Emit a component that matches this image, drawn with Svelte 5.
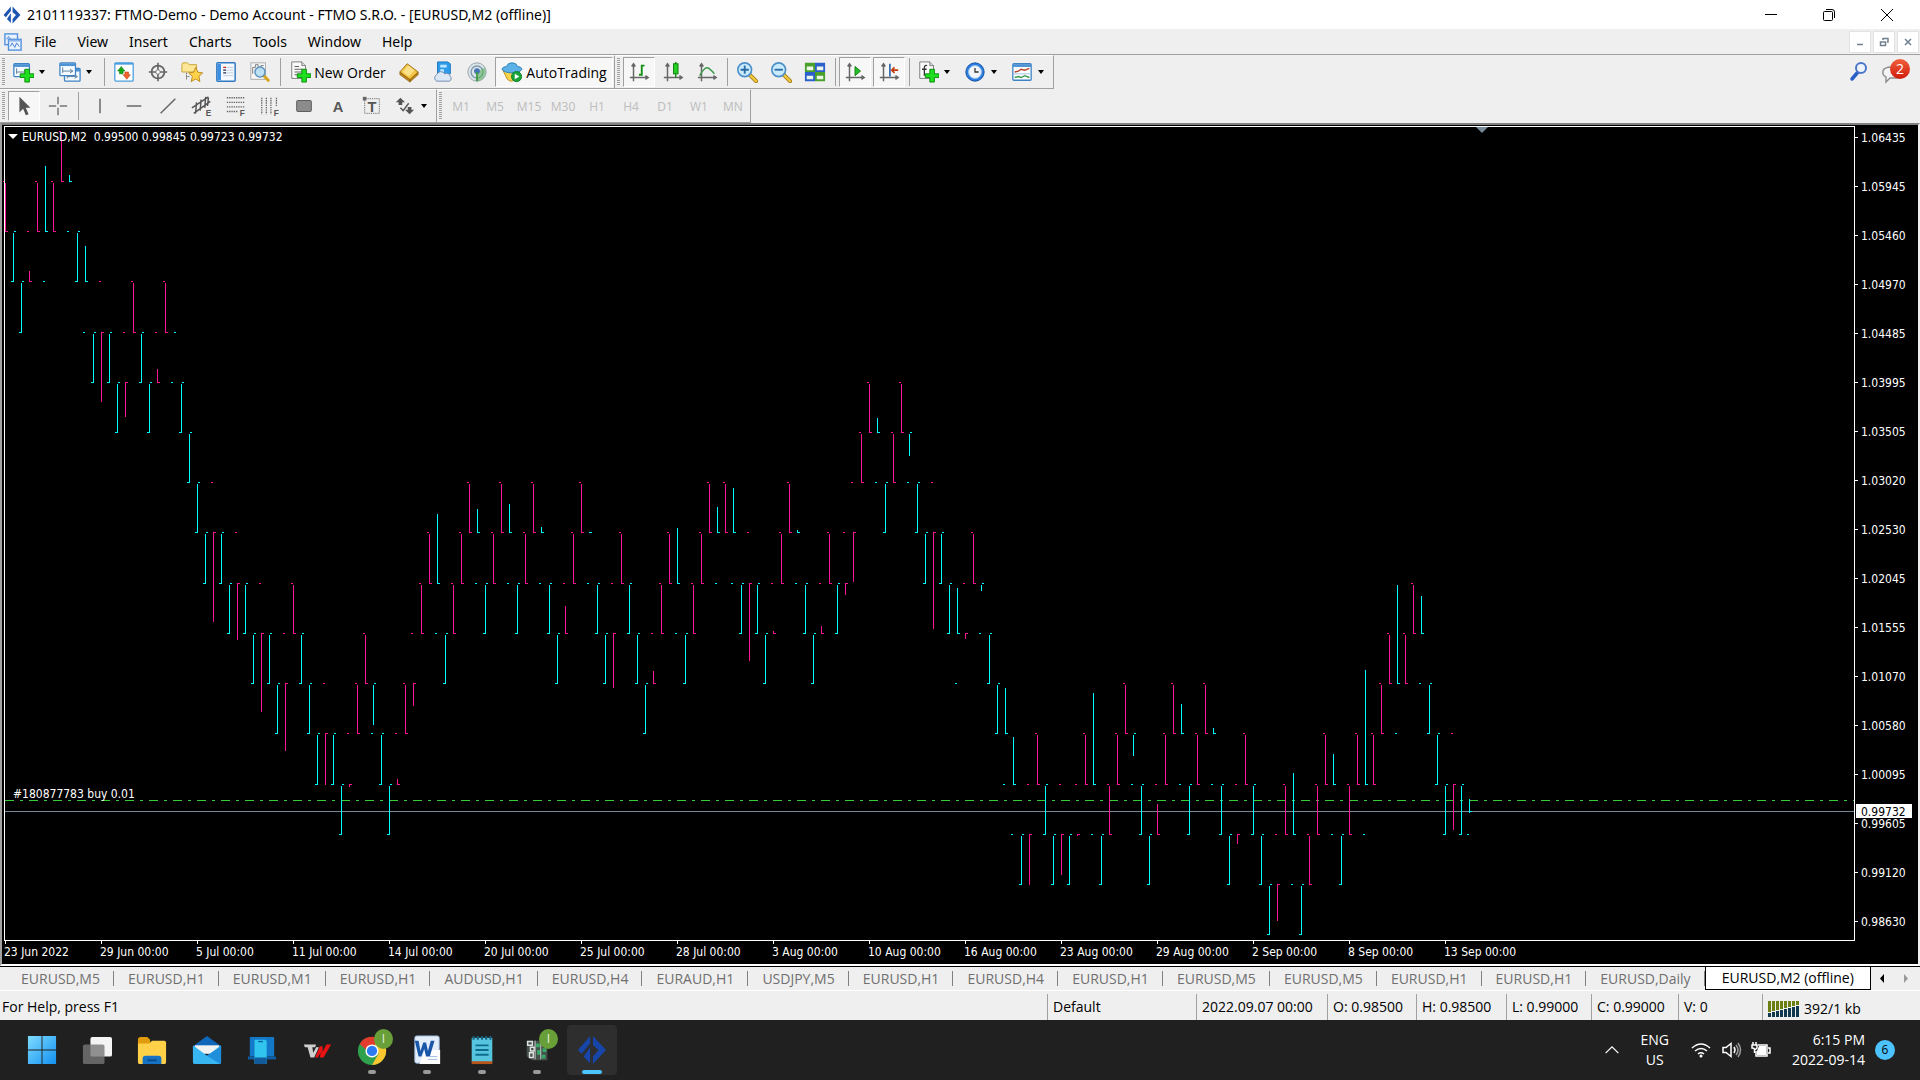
<script>
  const MENUS = ['File', 'View', 'Insert', 'Charts', 'Tools', 'Window', 'Help'];
  const LINE_TOOLS = ['vline', 'hline', 'trend', 'channel', 'fibo', 'fibotime', 'rect', 'letter', 'label'];
  const PERIODS = ['M1', 'M5', 'M15', 'M30', 'H1', 'H4', 'D1', 'W1', 'MN'];
  const TABS = [
    'EURUSD,M5', 'EURUSD,H1', 'EURUSD,M1', 'EURUSD,H1', 'AUDUSD,H1', 'EURUSD,H4',
    'EURAUD,H1', 'USDJPY,M5', 'EURUSD,H1', 'EURUSD,H4', 'EURUSD,H1', 'EURUSD,M5',
    'EURUSD,M5', 'EURUSD,H1', 'EURUSD,H1', 'EURUSD,Daily', 'EURUSD,M2 (offline)',
  ];
  const STATUS = ['Default', '2022.09.07 00:00', 'O: 0.98500', 'H: 0.98500', 'L: 0.99000', 'C: 0.99000', 'V: 0'];
  const PRICES = [
    '1.06435', '1.05945', '1.05460', '1.04970', '1.04485', '1.03995', '1.03505', '1.03020', '1.02530',
    '1.02045', '1.01555', '1.01070', '1.00580', '1.00095', '0.99605', '0.99120', '0.98630',
  ];
  const DATES = [
    '23 Jun 2022', '29 Jun 00:00', '5 Jul 00:00', '11 Jul 00:00', '14 Jul 00:00', '20 Jul 00:00',
    '25 Jul 00:00', '28 Jul 00:00', '3 Aug 00:00', '10 Aug 00:00', '16 Aug 00:00', '23 Aug 00:00',
    '29 Aug 00:00', '2 Sep 00:00', '8 Sep 00:00', '13 Sep 00:00',
  ];
  const APPS = [
    { id: 'start', name: 'Start' },
    { id: 'taskview', name: 'Task View' },
    { id: 'explorer', name: 'File Explorer' },
    { id: 'mail', name: 'Mail' },
    { id: 'phone', name: 'Your Phone' },
    { id: 'tv', name: 'Trading' },
    { id: 'chrome', name: 'Chrome', running: true },
    { id: 'word', name: 'Word', running: true },
    { id: 'notepad', name: 'Notepad', running: true },
    { id: 'renko', name: 'Renko', running: true },
    { id: 'ftmo', name: 'FTMO', running: true, active: true },
  ];

  // Y of every 50-point brick level, top down.
  const LEVELS = [131, 181, 231, 281, 332, 382, 432, 482, 532, 583, 633, 683, 733, 784, 834, 884, 934];
  const STEP = 8;

  // One entry per bar: direction + level of the right tick, optional line extent.
  // C = lower brick behind it, P = upper brick behind it.
  const BARS = `
    P2 C2 C3 P3:271-281 P2 C2:166-231 P2 P1 C1:175-181 C2 C3:246-281 C4 P4:332-401 C4 C5 P5:382-416
    P4 C4 C5 P5:369-382 P4 C4:0-0 C5 C6 C7 C8 P8:532-621 C8 C9 P9:583-639 C9 C10 P10:633-711 C10 C11
    P11:683-750 P10 C10 C11 C12 P12:733-784 C12 C13 P13:784-786 P12 P11 C11:685-724 C12 C13 P13:779-784
    P12 P11:683-705 P10 P9 C9:514-583 C10 P10 P9 P8 C8:509-532 C9 P9 P8 C8:504-532 C9 P9 P8 C8:527-532
    C9 C10 P10:606-633 P9 P8 C8:532-532 C9 C10 P10:633-687 P9 C9 C10 C11 P11:671-683 P10 P9 C9:528-583
    C10 P10 P9 P8 C8:507-532 P8 C8:488-532 C9 P9:583-660 C9 C10 P10:631-633 P9 P8 C8:530-532 C9 C10
    P10:626-633 P9 C9 P9:583-594 P8:532-581 P7 P6 C6:418-432 C7 P7 P6 C6:434-455 C7 C8 P8:532-628 C8 C9
    C10:588-633 P10:633-638 P9 C9:585-590 C10 C11 C12:688-733 C13:737-784 C14 P14:834-884 P13 C13 C14
    P14:834-874 C14 P14:834-835 P13 C13:693-784 C14 P14 P13 P12 C12:735-755 C13 C14 P14:804-834 P13 P12
    C12:704-733 C13 P13 P12 C12:728-733 C13 C14 P14:834-843 P13 C13 C14 C15 P15:884-920 P14 C14:773-834
    C15 P15 P14 P13 C13:754-784 C14 P14 P13 C13:670-784 P13 P12 P11 C11:585-683 P11 P10 C10:596-633 C11
    C12 C13 P13:784-829 C13`.trim().split(/\s+/);

  const box = (x, y, w, h) => `M${x} ${y}h${w}v${h}h${-w}z`;

  function barPath(dir) {
    return BARS.map((spec, i) => {
      if (spec[0] !== dir) return '';
      const [head, range] = spec.split(':');
      const level = Number(head.slice(1));
      const x = 5 + i * STEP;
      const left = LEVELS[dir === 'C' ? level + 1 : level - 1];
      const right = LEVELS[level];
      const [y1, y2] = range ? range.split('-').map(Number) : [Math.min(left, right) + 2, Math.max(left, right)];
      const line = y2 ? box(x, y1, 1, y2 - y1 + 1) : '';
      return line + box(x - 2, left, 2, 1) + box(x + 1, right, 2, 1);
    }).join('');
  }

  const cyanPath = barPath('C');
  const pinkPath = barPath('P');
  const lastBar = box(1469, 799, 1, 14) + box(1467, 834, 2, 1) + box(1470, 811, 2, 1);

  let chartW = $state(1916);
  let chartH = $state(839);
  let right  = $derived(chartW - 62);
  let bottom = $derived(chartH + 101);

  let activeTab = $state(TABS.length - 1);
  let autoTrading = $state(true);
</script>

{#snippet axes()}
  <path d="M6 4v18M2 18h19M4 6l2-3 2 3M19 16l3 2-3 2" fill="none" stroke="#666" stroke-width="1.6" />
{/snippet}

{#snippet plus()}
  <path d="M14 9h5v5h5v4h-5v5h-5v-5H9v-4h5z" fill="#1fe01f" stroke="#0a8a0a" />
{/snippet}

{#snippet windowIcon(x, y)}
  <rect {x} {y} width="17" height="14" rx="1" fill="#f4faff" stroke="#3f83c4" stroke-width="1.4" />
  <path d="M{x} {y + 2}h17" stroke="#4d93d3" stroke-width="3" />
  <path d="M{x + 3} {y + 5}v6M{x + 3} {y + 9}h11M{x + 11} {y + 7}l3 2-3 2" fill="none" stroke="#5c7894" />
{/snippet}

{#snippet icon(name)}
  <svg class="icon" viewBox="0 0 24 24" aria-hidden="true">
    {#if name === 'newchart'}
      {@render windowIcon(2, 3)}
      {@render plus()}
    {:else if name === 'profiles'}
      {@render windowIcon(6, 8)}
      {@render windowIcon(1, 2)}
    {:else if name === 'market'}
      <rect x="2" y="2" width="20" height="20" rx="1" fill="#fff" stroke="#4a9fe0" stroke-width="1.4" />
      <path d="M2 3h20" stroke="#4a9fe0" stroke-width="2" />
      <path d="M5 11l4-5 4 5h-2v3H7v-3z" fill="#16a516" stroke="#0b7d0b" stroke-width=".6" />
      <path d="M11 15h2v-3h4v3h2l-4 5z" fill="#f0622a" stroke="#b83c10" stroke-width=".6" />
    {:else if name === 'datawin'}
      <circle cx="12" cy="12" r="7" fill="none" stroke="#666" stroke-width="2" />
      <path d="M12 2v8M12 14v8M2 12h8M14 12h8" stroke="#666" stroke-width="1.8" />
      <circle cx="12" cy="12" r="2.4" fill="#fff" stroke="#777" />
    {:else if name === 'navigator'}
      <path d="M1 4l1-2h5l2 2h8v8H1z" fill="#fbe795" stroke="#c8a12c" />
      <path d="M6 13v8M6 17h4" stroke="#333" stroke-dasharray="1 1" />
      <path d="M16 7l2.4 5.2 5.2.8-4 3.7 1 5.8-4.6-3-4.8 3 1.2-5.8-4-3.7 5.4-.8z" fill="#fdd148" stroke="#b8841a" />
    {:else if name === 'terminal'}
      <rect x="2" y="2" width="20" height="20" rx="1" fill="#f5faff" stroke="#2f78c0" stroke-width="1.6" />
      <path d="M4.500 3v18" stroke="#3c8fe0" stroke-width="4" />
      <path d="M9 7h11M9 10h11M9 13h11M9 16h11" stroke="#bfcbdc" />
      <path d="M9 7h3" stroke="#d22" stroke-width="1.4" />
      <path d="M9 10h3M9 13h3" stroke="#335" stroke-width="1.4" />
    {:else if name === 'tester'}
      <rect x="2" y="2" width="16" height="18" fill="#f6f6f6" stroke="#aaa" />
      <path d="M4 14V7h3V4h3v6h3V5h3" fill="none" stroke="#777" />
      <path d="M16 16l5 5" stroke="#d9a520" stroke-width="3.400" stroke-linecap="round" />
      <circle cx="12" cy="12" r="5.500" fill="#b9dff6" fill-opacity=".9" stroke="#5d92bd" stroke-width="1.600" />
    {:else if name === 'order'}
      <path d="M3 1h11l4 4v14H3z" fill="#fafafa" stroke="#777" />
      <path d="M14 1v4h4" fill="#ddd" stroke="#777" />
      <path d="M6 6h5M6 9h9M6 12h9M6 15h6" stroke="#555" />
      {@render plus()}
    {:else if name === 'editor'}
      <path d="M2 12L10 3l12 9-9 9z" fill="#f4c542" stroke="#9a6b10" />
      <path d="M2 12l11 8v3L2 15zM13 20l9-8v3l-9 8z" fill="#b8801a" stroke="#8a5c0c" stroke-width=".6" />
      <path d="M5 12l6-7 7 5-6 7z" fill="#fbe08a" />
    {:else if name === 'vps'}
      <path d="M6 1h11l3 2v11H6z" fill="#2e9bea" stroke="#1673bd" />
      <path d="M9 4h7v3H9zM9 9h4v3H9z" fill="#bfe6ff" />
      <path d="M5 22a4 4 0 0 1 0-7 5 5 0 0 1 9-1 4 4 0 0 1 6 3 3 3 0 0 1-1 5z" fill="#dce7f5" stroke="#6d86ad" />
    {:else if name === 'signals'}
      <circle cx="12" cy="12" r="10" fill="#dce4e8" stroke="#8fa0aa" />
      <circle cx="12" cy="12" r="6.500" fill="none" stroke="#7f9cb0" stroke-width="1.500" />
      <path d="M12 12v10a10 10 0 0 0 8-15z" fill="#5db35d" fill-opacity=".6" />
      <circle cx="12" cy="11" r="3.200" fill="#4374b8" />
      <path d="M12 12v10" stroke="#3f9b45" stroke-width="2" />
    {:else if name === 'auto'}
      <path d="M2 10h19l-5 10q-5 4-9 0z" fill="#f8d44a" stroke="#b48a14" />
      <path d="M1 9q1-3 5-3 1-4 6-4t6 4q4 0 5 3-3 4-11 4T1 9z" fill="#5cb2e6" stroke="#2a7fb5" />
      <circle cx="17" cy="17" r="5.500" fill="#17a53a" stroke="#0c7c28" />
      <path d="M15 14l5 3-5 3z" fill="#fff" />
    {:else if name === 'bars'}
      {@render axes()}
      <path d="M15 4v12M15 5h3M12 15h3" stroke="#109010" stroke-width="2" />
    {:else if name === 'candles'}
      {@render axes()}
      <path d="M15 1v17" stroke="#0b7d0b" stroke-width="1.400" />
      <rect x="12.500" y="3" width="5" height="11" fill="#22d022" stroke="#0b7d0b" />
    {:else if name === 'linechart'}
      {@render axes()}
      <path d="M4 16Q10 5 14 8t6 6" fill="none" stroke="#3a9a4a" stroke-width="1.600" />
    {:else if name === 'zoomin' || name === 'zoomout'}
      <path d="M14 14l8 8" stroke="#9a7410" stroke-width="4.400" stroke-linecap="round" />
      <path d="M14 14l8 8" stroke="#f2c83c" stroke-width="2.600" stroke-linecap="round" />
      <circle cx="9.500" cy="9.500" r="7.500" fill="#c9ebfc" stroke="#4d90c8" stroke-width="1.800" />
      <path d={name === 'zoomin' ? 'M5 9.500h9M9.500 5v9' : 'M5 9.500h9'} stroke="#2a6aa4" stroke-width="2" />
    {:else if name === 'tile'}
      <path d="M1 2h11v10H1zM12 12h11v10H12z" fill="#4aa02a" />
      <path d="M12 2h11v10H12zM1 12h11v10H1z" fill="#2a5fcc" />
      <path d="M3 6h7v4H3zM14 6h7v4h-7zM3 16h7v4H3zM14 16h7v4h-7z" fill="#eef6ea" />
    {:else if name === 'scroll'}
      {@render axes()}
      <path d="M12 6l6 5-6 5z" fill="#25c025" stroke="#0b7d0b" />
    {:else if name === 'shift'}
      {@render axes()}
      <path d="M13 3v14" stroke="#2a62a8" stroke-width="1.800" />
      <path d="M22 10h-7M18 7l-3 3 3 3" fill="none" stroke="#c33a0c" stroke-width="1.800" />
    {:else if name === 'indicators'}
      <path d="M3 1h11l4 4v14H3z" fill="#fafafa" stroke="#777" />
      <path d="M14 1v4h4" fill="#ddd" stroke="#777" />
      <path d="M11 5q-3-1-3 3v8M5.500 9h5" fill="none" stroke="#333" stroke-width="1.400" />
      {@render plus()}
    {:else if name === 'clock'}
      <circle cx="12" cy="12" r="10" fill="#2a7ee0" stroke="#1450a0" />
      <circle cx="12" cy="12" r="7" fill="#f2f6fa" stroke="#9cc4ee" />
      <path d="M12 7.500V12h4" fill="none" stroke="#333" stroke-width="1.400" />
    {:else if name === 'template'}
      <rect x="2" y="3" width="20" height="18" rx="1" fill="#fafdff" stroke="#3f83c4" stroke-width="1.400" />
      <path d="M2 5h20" stroke="#4d93d3" stroke-width="3" />
      <path d="M4 12l4-1 3-2 4 1 5-2" fill="none" stroke="#b8442a" stroke-width="1.500" />
      <path d="M3 14h18" stroke="#9fc3e4" />
      <path d="M4 18l4-1 3 1 4-2 5 2" fill="none" stroke="#3a9a4a" stroke-width="1.500" />
    {:else if name === 'cursor'}
      <path d="M7 2v17l4-4 3 7 3-1-3-7h5z" fill="#555" />
    {:else if name === 'cross'}
      <path d="M12 2v8M12 14v8M2 12h8M14 12h8" stroke="#777" stroke-width="1.600" />
    {:else if name === 'vline'}
      <path d="M12 4v16" stroke="#666" stroke-width="1.600" />
    {:else if name === 'hline'}
      <path d="M4 12h16" stroke="#666" stroke-width="1.600" />
    {:else if name === 'trend'}
      <path d="M4 20L20 4" stroke="#666" stroke-width="1.600" />
    {:else if name === 'channel'}
      <path d="M1 14L19 2M3 20L21 7M6 8l-1 12M11 5l-1 12M16 2l-1 12M19 3l-1 9" stroke="#555" stroke-width="1.600" />
      <text x="16" y="23" class="glyph">E</text>
    {:else if name === 'fibo'}
      <path d="M2 3h19M2 8h19M2 13h19M2 18h12" stroke="#666" stroke-width="1.400" stroke-dasharray="1.500 1" />
      <text x="16" y="23" class="glyph">F</text>
    {:else if name === 'fibotime'}
      <path d="M3 3v18M8 3v18M13 3v18M19 3v10" stroke="#666" stroke-width="1.400" stroke-dasharray="1.500 1" />
      <text x="16" y="23" class="glyph">F</text>
    {:else if name === 'rect'}
      <rect x="4" y="6" width="16" height="12" rx="1" fill="#8c8c8c" stroke="#555" />
    {:else if name === 'letter'}
      <text x="12" y="18" text-anchor="middle" class="letter">A</text>
    {:else if name === 'label'}
      <rect x="4" y="4" width="16" height="16" fill="none" stroke="#555" stroke-dasharray="1 1" />
      <path d="M2 2h4v4H2z" fill="#666" />
      <text x="12" y="18" text-anchor="middle" class="letter">T</text>
    {:else if name === 'arrows'}
      <path d="M7 3l5 5H9v3H5V8H2zM17 21l-5-5h3v-3h4v3h3z" fill="#555" />
      <path d="M7 14l3 3 6-8" fill="none" stroke="#555" stroke-width="1.600" />
    {/if}
  </svg>
{/snippet}

{#snippet tool(name, pressed = false)}
  <button class="tool" class:pressed aria-label={name}>{@render icon(name)}</button>
{/snippet}

{#snippet dropTool(name)}
  <button class="tool drop" aria-label={name}>{@render icon(name)}<span class="caret"></span></button>
{/snippet}

{#snippet ftmoLogo(color)}
  <path d="M14 1v8L5 20l-4-4zM14 13v17l-7-7zM17 1l14 15-14 15v-8l6-7-6-5z" fill={color} />
{/snippet}

<div class="window">
  <header class="titlebar">
    <svg class="logo" viewBox="0 0 32 32" aria-hidden="true">{@render ftmoLogo('#1d56b0')}</svg>
    <h1>2101119337: FTMO-Demo - Demo Account - FTMO S.R.O. - [EURUSD,M2 (offline)]</h1>
    <div class="win-btns">
      <button aria-label="Minimize"><svg viewBox="0 0 14 14"><path d="M1 6.500h12" /></svg></button>
      <button aria-label="Restore"><svg viewBox="0 0 14 14"><rect x="1.500" y="3.500" width="9" height="9" rx="1" /><path d="M4 1.500h6q2.500 0 2.500 2.500v6" /></svg></button>
      <button aria-label="Close"><svg viewBox="0 0 14 14"><path d="M1 1l12 12M13 1L1 13" /></svg></button>
    </div>
  </header>

  <nav class="menubar">
    <svg class="app-icon" viewBox="0 0 20 20" aria-hidden="true">
      <rect x="1" y="1" width="14" height="12" fill="#e8f1fc" stroke="#4f8fdc" stroke-width="1.500" />
      <rect x="5" y="7" width="14" height="12" fill="#e8f1fc" stroke="#4f8fdc" stroke-width="1.500" />
      <path d="M3 7l2-3 2 3M7 15l2-4 3 5 2-5 3 4" fill="none" stroke="#3d7bd0" />
      <path d="M5 8.500h14" stroke="#8ab4ea" stroke-width="2" />
    </svg>
    <div class="menus">
      {#each MENUS as m}
        <button class="menu">{m}</button>
      {/each}
    </div>
    <div class="mdi-btns">
      <button aria-label="Minimize chart"><svg viewBox="0 0 10 10"><path d="M2 7.500h6" /></svg></button>
      <button aria-label="Restore chart"><svg viewBox="0 0 10 10"><path d="M1.500 5h5v3.500h-5zM4 3V1.500h5V5H8" /></svg></button>
      <button aria-label="Close chart"><svg viewBox="0 0 10 10"><path d="M2 2l6 6M8 2L2 8" /></svg></button>
    </div>
  </nav>

  <div class="toolrow">
    <div class="band">
      <span class="grip"></span>
      {@render dropTool('newchart')}
      {@render dropTool('profiles')}
      <span class="sep"></span>
      {@render tool('market')}
      {@render tool('datawin')}
      {@render tool('navigator')}
      {@render tool('terminal')}
      {@render tool('tester')}
      <span class="sep"></span>
      <button class="tool text-tool">{@render icon('order')}New Order</button>
      {@render tool('editor')}
      {@render tool('vps')}
      {@render tool('signals')}
      <button class="tool text-tool auto" class:pressed={autoTrading} onclick={() => autoTrading = !autoTrading}>
        {@render icon('auto')}AutoTrading
      </button>
    </div>
    <div class="band">
      <span class="grip"></span>
      {@render tool('bars', true)}
      {@render tool('candles')}
      {@render tool('linechart')}
      <span class="sep"></span>
      {@render tool('zoomin')}
      {@render tool('zoomout')}
      {@render tool('tile')}
      <span class="sep"></span>
      {@render tool('scroll', true)}
      {@render tool('shift', true)}
      <span class="sep"></span>
      {@render dropTool('indicators')}
      {@render dropTool('clock')}
      {@render dropTool('template')}
    </div>
    <div class="row-end">
      <button class="bare" aria-label="Search">
        <svg viewBox="0 0 20 20">
          <path d="M3 18l6-7" stroke="#2a5fc8" stroke-width="3.500" stroke-linecap="round" />
          <circle cx="12" cy="7" r="5" fill="#eef4fc" stroke="#4a76c8" stroke-width="2" />
        </svg>
      </button>
      <button class="bare chat" aria-label="Messages">
        <svg viewBox="0 0 20 20">
          <path d="M10 6h6v11h-8l-4 4v-5q-4-2-3-6t9-4z" fill="#f4f4f6" stroke="#8c8c8c" stroke-width="1.400" />
        </svg>
        <span class="count">2</span>
      </button>
    </div>
  </div>

  <div class="toolrow">
    <div class="band">
      <span class="grip"></span>
      {@render tool('cursor', true)}
      {@render tool('cross')}
      <span class="sep"></span>
      <div class="lines">
        {#each LINE_TOOLS as t}
          {@render tool(t)}
        {/each}
        {@render dropTool('arrows')}
      </div>
    </div>
    <div class="band">
      <span class="grip"></span>
      {#each PERIODS as p}
        <button class="tool period" disabled>{p}</button>
      {/each}
    </div>
  </div>

  <main class="chart">
    <div class="canvas" bind:clientWidth={chartW} bind:clientHeight={chartH}>
      <svg width="100%" height="100%">
        <!-- window coordinates, shifted by the canvas origin -->
        <g transform="translate(-2 -125)">
          <g shape-rendering="crispEdges">
            <path class="order" d="M5 800.500H{right}" />
            <path class="bid" d="M5 811.500H{right}" />
            <path d={pinkPath} fill="#ff1493" />
            <path d={cyanPath + lastBar} fill="#00ffff" />
            <path class="frame" d="M4.500 126.500H{right + 0.5}V{bottom + 0.5}H4.500z" />
            {#each PRICES as _, i}
              <path class="frame" d="M{right} {137.5 + i * 49}h4" />
            {/each}
            {#each DATES as _, i}
              <path class="frame" d="M{5.5 + i * 96} {bottom}v4" />
            {/each}
          </g>
          <path d="M1476 127h12l-6 6z" fill="#778899" />
          <path d="M8 134h10l-5 5z" fill="#fff" />
          <text x="22" y="141">EURUSD,M2&nbsp; 0.99500 0.99845 0.99723 0.99732</text>
          <text x="13" y="798">#180877783 buy 0.01</text>
          {#each PRICES as p, i}
            <text x={right + 7} y={142 + i * 49}>{p}</text>
          {/each}
          {#each DATES as d, i}
            <text x={4 + i * 96} y={bottom + 16}>{d}</text>
          {/each}
          <rect x={right + 2} y="804" width="56" height="14" fill="#fff" />
          <text x={right + 7} y="816" class="dark">0.99732</text>
        </g>
      </svg>
    </div>
  </main>

  <div class="tabs">
    {#each TABS as t, i}
      <button class="tab" class:active={activeTab === i} onclick={() => activeTab = i}>{t}</button>
    {/each}
    <div class="tab-nav">
      <button class="bare" aria-label="Previous tab"><svg viewBox="0 0 10 10"><path d="M7 0v9L3 4.500z" fill="#000" /></svg></button>
      <button class="bare" aria-label="Next tab"><svg viewBox="0 0 10 10"><path d="M3 0v9l4-4.500z" fill="#999" /></svg></button>
    </div>
  </div>

  <div class="status">
    <span>For Help, press F1</span>
    {#each STATUS as s}
      <span class="cell">{s}</span>
    {/each}
    <span class="cell net">
      <svg viewBox="0 0 32 18" aria-hidden="true">
        {#each Array(8) as _, i}
          <rect x={i * 4} y="1" width="3" height={11 - i} fill="#6b7f10" />
          <rect x={i * 4} y={13 - i} width="3" height={4 + i} fill="#10384e" />
        {/each}
      </svg>
      392/1 kb
    </span>
  </div>
</div>

<footer class="taskbar">
  <div class="apps">
    {#each APPS as app}
      <button class="app" class:running={app.running} class:current={app.active} aria-label={app.name}>
        <svg viewBox="0 0 32 32">
          {#if app.id === 'start'}
            <linearGradient id="win" x1="0" y1="0" x2="1" y2="1">
              <stop offset="0" stop-color="#7fdcff" /><stop offset="1" stop-color="#1290f0" />
            </linearGradient>
            <path d="M1 1h14.500v14.500H1zM16.500 1H31v14.500H16.500zM1 16.500h14.500V31H1zM16.500 16.500H31V31H16.500z" fill="url(#win)" />
          {:else if app.id === 'taskview'}
            <rect x="9" y="2" width="23" height="21" rx="2" fill="#f4f4f4" />
            <rect x="1" y="10" width="23" height="21" rx="2" fill="#777" fill-opacity=".8" />
          {:else if app.id === 'explorer'}
            <path d="M1 5q0-3 3-3h7l3 3v6H1z" fill="#e09c0c" />
            <path d="M1 9h12l3-3h13q2 0 2 2v21q0 2-2 2H3q-2 0-2-2z" fill="#ffd048" />
            <path d="M6 31v-6q0-3 3-3h14q3 0 3 3v6z" fill="#1673c4" />
            <path d="M11 27h10" stroke="#0a4a88" stroke-width="2" />
          {:else if app.id === 'mail'}
            <path d="M1 12L16 1l15 11v8H1z" fill="#1066b8" />
            <path d="M3 11h26v9H3z" fill="#f2f2f2" />
            <path d="M1 11l15 11 15-11v18q0 2-2 2H3q-2 0-2-2z" fill="#38b6f2" />
            <path d="M16 22l15-10v17q0 1-1 2z" fill="#1f8fdc" />
          {:else if app.id === 'phone'}
            <rect x="3" y="2" width="26" height="21" rx="1" fill="#1378c8" />
            <path d="M1 23h30v3H1z" fill="#0d5ea6" />
            <path d="M8 6q0-1 1-1h10q2 0 2 2v24H8z" fill="#30c4ee" />
            <path d="M8 24h13v7H8z" fill="#125a9a" />
            <path d="M12 7h5" stroke="#0d5ea6" stroke-width="1.500" />
          {:else if app.id === 'tv'}
            <path d="M2 10h13l-1 3h-3l1 6 3-6h3l-5 11H9L6 13H3z" fill="#cfcfcf" />
            <path d="M14 24l5-12h3v6l4-8h5l-8 14h-4l1-6-3 6z" fill="#e81414" />
          {:else if app.id === 'chrome'}
            <circle cx="16" cy="17" r="15" fill="#2fa04c" />
            <path d="M3 9.500a15 15 0 0 1 26 0L16 11l-5 6z" fill="#e33b2e" />
            <path d="M29 9.500A15 15 0 0 1 16 32l7-12-4-10.500z" fill="#fcc62f" />
            <circle cx="16" cy="17" r="7" fill="#fff" />
            <circle cx="16" cy="17" r="5.500" fill="#2c7bf0" />
          {:else if app.id === 'word'}
            <rect x="3" y="1" width="26" height="29" rx="2" fill="#e4eefb" stroke="#9cb8dc" />
            <path d="M14 16h16v15H8z" fill="#fff" />
            <path d="M3 6h4l2 11 3-9h3l2 9 3-11h4l-5 17h-4l-2-8-3 8H7z" fill="#1a56a8" />
            <path d="M18 23h9M17 26h10" stroke="#9cb8dc" />
          {:else if app.id === 'notepad'}
            <path d="M5 3h22v26H5z" fill="#56c4dc" />
            <path d="M5 28h22v3H5z" fill="#b8561a" />
            <path d="M7 1v4M11.500 1v4M16 1v4M20.500 1v4M25 1v4" stroke="#135f80" stroke-width="2" />
            <path d="M9 11h14M9 16h14M9 21h14" stroke="#0f6b8c" stroke-width="2" />
          {:else if app.id === 'renko'}
            <path d="M5 6h22v21H11l-6-4z" fill="#44504a" />
            <path d="M6 7h5v4H6zM9 13h4v4H9zM8 19h4v5H8z" fill="none" stroke="#e0e0e0" stroke-width="1.500" />
            <path d="M15 9h4v4h-4zM16 16h4v5h-4zM22 14h4v4h-4zM21 21h4v4h-4z" fill="#38a868" />
            <path d="M14 6v20M20 8v18" stroke="#ccc" />
          {:else}
            {@render ftmoLogo('#1746a8')}
          {/if}
        </svg>
        {#if app.id === 'chrome' || app.id === 'renko'}
          <span class="badge">I</span>
        {/if}
      </button>
    {/each}
  </div>

  <div class="tray">
    <button class="bare" aria-label="Hidden icons"><svg viewBox="0 0 20 20"><path d="M2 14l8-8 8 8" /></svg></button>
    <button class="bare lang">ENG<br />US</button>
    <button class="bare signals" aria-label="Network, volume, battery">
      <svg viewBox="0 0 20 20">
        <path d="M1 8q9-8 18 0M4 11q6-5 12 0M7 14q3-2.500 6 0" />
        <circle cx="10" cy="16" r="1.500" fill="#fff" stroke="none" />
      </svg>
      <svg viewBox="0 0 20 20">
        <path d="M2 7.500h3l5-4v13l-5-4H2zM13 7q2 3 0 6" />
        <path d="M15 5q4 5 0 10M17 3q5 7 0 14" stroke="#999" />
      </svg>
      <svg viewBox="0 0 20 20">
        <path d="M7 5h9v11H5v-5M17 8h2v5h-2" />
        <path d="M8 6h7v9H6v-4z" fill="#fff" stroke="none" />
        <path d="M2 2v3M5 2v3M1 5h5v3q-2 2-2.500 1T1 8zM3.500 9v4" />
      </svg>
    </button>
    <button class="bare clock">6:15 PM<br />2022-09-14</button>
    <span class="notif">6</span>
  </div>
</footer>

<style>
  :global(body) {
    background: #efefef;
    font-family: 'Open Sans', 'Segoe UI', sans-serif;
    font-size: 14px;
    color: #000;
  }
  :global(#app) {
    height: 100vh;
    display: flex; flex-direction: column;
    overflow: hidden;
  }

  button {
    font: inherit; color: inherit;
    background: none; border: none; padding: 0; margin: 0;
    white-space: nowrap;
  }
  svg { display: block; flex-shrink: 0; }

  .window { flex: 1; min-height: 0; display: flex; flex-direction: column; }

  /* Title bar */
  .titlebar {
    display: flex; align-items: center;
    height: 29px;
    padding: 0 4px 0 2px;
    background: #fff;
  }
  .logo { width: 20px; height: 18px; }
  h1 {
    flex: 1; margin: 0 0 0 5px;
    font-family: 'Noto Sans', 'Segoe UI', sans-serif;
    font-size: 14px; line-height: 28px; font-weight: 400;
  }
  .win-btns { display: flex; }
  .win-btns button { width: 58px; height: 28px; display: flex; align-items: center; justify-content: center; }
  .win-btns svg { width: 14px; height: 14px; fill: none; stroke: #000; stroke-width: 1; }

  /* Menu bar */
  .menubar {
    display: flex; align-items: center;
    height: 25px;
    padding: 0 1px 0 4px;
    border-bottom: 1px solid #a0a0a0;
    font-family: 'Noto Sans', 'Segoe UI', sans-serif;
  }
  .app-icon { width: 18px; height: 20px; }
  .menus { display: flex; gap: 21px; padding-left: 12px; }
  .menu { line-height: 24px; }
  .mdi-btns { display: flex; gap: 2px; margin-left: auto; }
  .mdi-btns button {
    width: 22px; height: 22px;
    display: flex; align-items: center; justify-content: center;
    background: #fff; border: 1px solid #e2e2e2;
  }
  .mdi-btns svg { width: 10px; height: 10px; fill: none; stroke: #708090; stroke-width: 1.5; }

  /* Toolbars */
  .toolrow { display: flex; height: 34px; }
  .band {
    display: flex; align-items: center;
    box-sizing: border-box;
    border-top: 1px solid #fff;
    border-right: 1px solid #a0a0a0;
    border-bottom: 1px solid #a0a0a0;
  }
  .lines { display: flex; padding-left: 2px; }
  .grip {
    width: 3px; height: 28px; margin: 0 2px;
    background: repeating-linear-gradient(#a0a0a0 0 1px, #efefef 1px 2px);
  }
  .sep { width: 1px; height: 28px; margin: 0 2px 0 3px; background: #a0a0a0; }
  .tool {
    width: 34px; height: 30px;
    display: flex; align-items: center; justify-content: center;
    box-sizing: border-box;
    border: 1px solid transparent;
  }
  .icon { width: 22px; height: 22px; }
  .pressed {
    width: 32px; margin: 0 1px;
    background: #f7f7f7;
    border-color: #a0a0a0 #fff #fff #a0a0a0;
  }
  .drop { width: 47px; gap: 5px; padding-right: 4px; }
  .caret {
    border: 3px solid transparent;
    border-top: 4px solid #000; border-bottom: none;
  }
  .text-tool { width: 109px; gap: 3px; }
  .auto { width: 118px; }
  .period { color: #bcbcbc; font-size: 12px; }
  .glyph { font: 700 9px 'Liberation Sans', sans-serif; fill: #555; }
  .letter { font: 700 16px 'Liberation Sans', sans-serif; fill: #555; }

  .row-end { display: flex; align-items: flex-start; gap: 13px; margin-left: auto; padding: 6px 18px 0 0; }
  .bare { display: flex; align-items: center; }
  .bare svg { width: 20px; height: 20px; overflow: visible; }
  .chat { position: relative; height: 20px; }
  .count {
    position: absolute; left: 8px; top: -2px;
    width: 20px; height: 20px;
    border-radius: 50%;
    background: linear-gradient(#f0603c, #d01c0c);
    color: #fff; line-height: 20px; text-align: center;
  }

  /* Chart */
  .chart {
    flex: 1; min-height: 0;
    display: flex;
    border: 2px solid;
    border-color: #808080 #efefef #fff #a0a0a0;
    background: #000;
  }
  .canvas { flex: 1; min-width: 0; overflow: hidden; }
  .canvas text { font: 12px 'DejaVu Sans Condensed', Tahoma, sans-serif; fill: #fff; }
  .canvas .dark { fill: #000; }
  .frame { fill: none; stroke: #fff; }
  .order { stroke: #32cd32; stroke-dasharray: 9 6 3 6; }
  .bid { stroke: #778899; }

  /* Chart tabs */
  .tabs {
    display: flex;
    height: 25px;
    padding-left: 7px;
    border-top: 1px solid #000;
    border-bottom: 1px solid #fff;
    box-sizing: border-box;
  }
  .tab {
    position: relative;
    flex: 1 1 auto;
    line-height: 22px;
    color: #707070;
  }
  .tab::after {
    content: '';
    position: absolute; right: 0; top: 4px; bottom: 4px;
    border-right: 1px solid #808080;
  }
  .tab.active {
    padding: 0 2px;
    background: #fff; color: #000;
    border: 1px solid #000; border-top: none;
  }
  .tab.active::after { content: none; }
  .tab-nav { display: flex; gap: 14px; width: 39px; padding: 0 4px 0 6px; }
  .tab-nav svg { width: 10px; height: 10px; }

  /* Status bar */
  .status {
    display: grid;
    grid-template-columns: 1fr 149px 131px 89px 90px 85px 87px 84px 158px;
    height: 29px;
    line-height: 32px;
    padding-left: 2px;
  }
  .cell { border-left: 1px solid #a0a0a0; padding-left: 5px; margin-top: 3px; line-height: 26px; }
  .net { display: flex; align-items: center; gap: 4px; }
  .net svg { width: 32px; height: 18px; }

  /* Taskbar */
  .taskbar {
    display: flex; align-items: center; justify-content: space-between;
    height: 60px;
    padding: 0 25px 0 17px;
    background: #202020;
    color: #fff;
  }
  .apps { display: flex; gap: 5px; }
  .app {
    position: relative;
    width: 50px; height: 50px;
    display: flex; align-items: center; justify-content: center;
    border-radius: 4px;
  }
  .app svg { width: 30px; height: 30px; }
  .current { background: #2e2e2e; }
  .running::after {
    content: '';
    position: absolute; left: 21px; bottom: 1px;
    width: 8px; height: 4px; border-radius: 2px;
    background: #9a9a9a;
  }
  .current.running::after { left: 15px; width: 20px; background: #4cc2ff; }
  .badge {
    position: absolute; left: 27px; top: 4px;
    width: 19px; height: 20px; border-radius: 50%;
    background: #689f38; color: #e4f0d8;
    font-size: 12px; line-height: 20px; text-align: center;
  }

  .tray { display: flex; align-items: center; line-height: 20px; }
  .tray svg { fill: none; stroke: #fff; stroke-width: 1.5; }
  .tray > .bare:first-child svg { width: 16px; height: 16px; }
  .lang { margin-left: 20px; text-align: center; }
  .signals { gap: 10px; margin-left: 22px; }
  .clock { margin-left: 21px; text-align: right; }
  .notif {
    width: 20px; height: 20px; margin-left: 10px;
    border-radius: 50%;
    background: #4cc2ff; color: #000;
    font-size: 12px; line-height: 20px; text-align: center;
  }
</style>
